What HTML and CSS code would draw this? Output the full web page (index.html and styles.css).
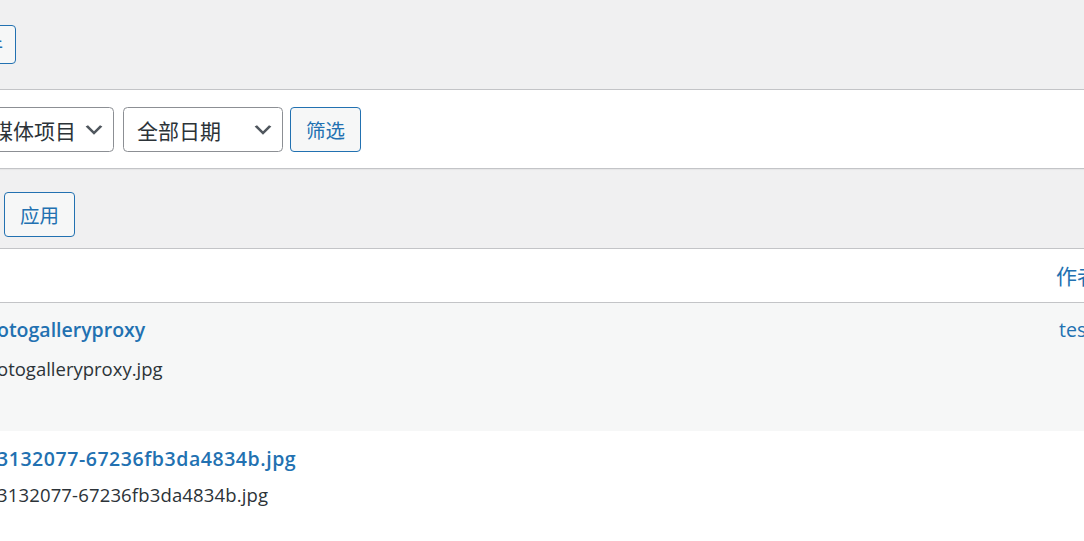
FILE: index.html
```html
<!DOCTYPE html>
<html lang="zh-CN">
<head>
<meta charset="utf-8">
<title>媒体库</title>
<link rel="stylesheet" href="styles.css">
</head>
<body>
<div class="page">
  <div class="head">
    <div class="head-slot">
      <a class="btn btn-title" href="#">添加文件</a>
    </div>
  </div>

  <div class="filter-bar">
    <div class="select select-type">
      <span class="select-text">所有媒体项目</span>
      <svg class="chev" viewBox="0 0 20 20" width="24" height="24" aria-hidden="true"><path d="M5 6l5 5 5-5 2 1-7 7-7-7 2-1z"/></svg>
    </div>
    <div class="select select-date">
      <span class="select-text">全部日期</span>
      <svg class="chev" viewBox="0 0 20 20" width="24" height="24" aria-hidden="true"><path d="M5 6l5 5 5-5 2 1-7 7-7-7 2-1z"/></svg>
    </div>
    <button class="btn btn-filter" type="button">筛选</button>
  </div>

  <div class="tablenav">
    <button class="btn btn-apply" type="button">应用</button>
  </div>

  <div class="table">
    <div class="row row-head">
      <div class="cell cell-title"></div>
      <div class="cell cell-author"><a href="#" class="link link-head">作者</a></div>
    </div>
    <div class="row row-item row-alt row-first">
      <div class="cell cell-title">
        <a href="#" class="item-title">otogalleryproxy</a>
        <p class="filename">otogalleryproxy.jpg</p>
      </div>
      <div class="cell cell-author cell-author-body"><a href="#" class="link">test</a></div>
    </div>
    <div class="row row-item row-second">
      <div class="cell cell-title">
        <a href="#" class="item-title numeric">3132077-67236fb3da4834b.jpg</a>
        <p class="filename numeric">3132077-67236fb3da4834b.jpg</p>
      </div>
      <div class="cell cell-author cell-author-body"></div>
    </div>
  </div>
</div>
</body>
</html>
```

FILE: styles.css
```css
html, body {
  margin: 0;
  padding: 0;
  overflow: hidden;
}

body {
  background: #f0f0f1;
  font-family: "Open Sans", "Noto Sans CJK SC", sans-serif;
  font-size: 19.5px;
  color: #2c3338;
  width: 1084px;
  height: 541px;
}

.page {
  width: 1084px;
}

a {
  text-decoration: none;
}

/* header */
.head {
  height: 89px;
  box-sizing: border-box;
  padding-top: 25px;
}

.head-slot {
  width: 16px;
  display: flex;
  justify-content: flex-end;
}

.btn {
  box-sizing: border-box;
  display: inline-flex;
  align-items: center;
  flex-shrink: 0;
  border: 1px solid #2271b1;
  border-radius: 4px;
  background: #f6f7f7;
  color: #2271b1;
  font-family: "Open Sans", "Noto Sans CJK SC", sans-serif;
  font-size: 19.5px;
  white-space: nowrap;
  margin: 0;
}

.btn-title {
  height: 39px;
  padding: 0 12px;
}

/* filter bar */
.filter-bar {
  background: #fff;
  border-top: 1px solid #c3c4c7;
  border-bottom: 1px solid #c3c4c7;
  box-shadow: 0 1px 1px rgba(0, 0, 0, 0.04);
  padding: 17px 0 16px;
  display: flex;
  align-items: center;
  height: 45px;
}

.select {
  box-sizing: border-box;
  height: 45px;
  border: 1px solid #8c8f94;
  border-radius: 4.5px;
  background: #fff;
  color: #2c3338;
  font-size: 21px;
  display: flex;
  align-items: center;
  padding-left: 13px;
  flex-shrink: 0;
}

.select-text {
  white-space: nowrap;
}

.chev {
  margin-left: auto;
  margin-right: 7px;
  fill: #50575e;
  flex-shrink: 0;
}

.select-type {
  width: 178px;
  margin-left: -64px;
}

.select-date {
  width: 160px;
  margin-left: 9px;
}

.btn-filter {
  height: 45px;
  width: 71px;
  margin-left: 7px;
  justify-content: center;
  padding: 0;
}

/* tablenav */
.tablenav {
  height: 79px;
  box-sizing: border-box;
  padding-top: 23px;
}

.btn-apply {
  height: 45px;
  width: 71px;
  margin-left: 4px;
  justify-content: center;
  padding: 0;
}

/* table */
.table {
  border-top: 1px solid #c3c4c7;
  background: #fff;
  width: 1300px;
}

.row {
  display: grid;
  grid-template-columns: 1044px 256px;
}

.row-head {
  height: 53px;
  border-bottom: 1px solid #c3c4c7;
  align-items: center;
}

.cell-author {
  padding-left: 12px;
}

.cell-author-body {
  padding-left: 15px;
}

.link {
  color: #2271b1;
  line-height: 28px;
}

.link-head {
  font-size: 21px;
}

.row-alt {
  background: #f6f7f7;
}

.row-item {
  align-items: start;
}

.row-first {
  height: 128px;
  box-sizing: border-box;
  padding-top: 13px;
}

.row-second {
  height: 110px;
  box-sizing: border-box;
  padding-top: 14px;
}

.item-title {
  display: block;
  margin-left: -3px;
  color: #2271b1;
  font-weight: 600;
  line-height: 28px;
  white-space: nowrap;
}

.filename {
  margin: 11px 0 0 -3px;
  font-size: 18.5px;
  line-height: 28px;
  white-space: nowrap;
}

.row-second .filename {
  margin-top: 8px;
}

.item-title.numeric {
  letter-spacing: 0.55px;
}

.filename.numeric {
  letter-spacing: 0.15px;
}
```
